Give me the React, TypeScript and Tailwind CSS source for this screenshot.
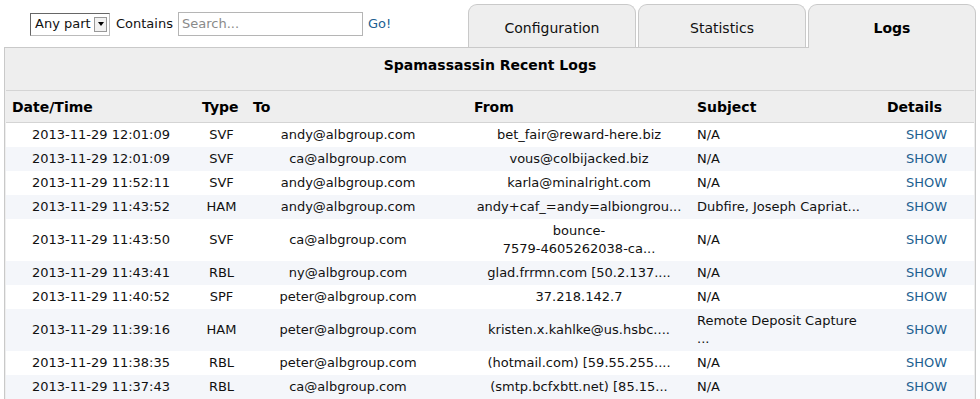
import React from "react";

type Cell = string | string[];

const ROWS: { date: string; type: string; to: string; from: Cell; subject: Cell }[] = [
  { date: "2013-11-29 12:01:09", type: "SVF", to: "andy@albgroup.com", from: "bet_fair@reward-here.biz", subject: "N/A" },
  { date: "2013-11-29 12:01:09", type: "SVF", to: "ca@albgroup.com", from: "vous@colbijacked.biz", subject: "N/A" },
  { date: "2013-11-29 11:52:11", type: "SVF", to: "andy@albgroup.com", from: "karla@minalright.com", subject: "N/A" },
  { date: "2013-11-29 11:43:52", type: "HAM", to: "andy@albgroup.com", from: "andy+caf_=andy=albiongrou...", subject: "Dubfire, Joseph Capriat..." },
  { date: "2013-11-29 11:43:50", type: "SVF", to: "ca@albgroup.com", from: ["bounce-", "7579-4605262038-ca..."], subject: "N/A" },
  { date: "2013-11-29 11:43:41", type: "RBL", to: "ny@albgroup.com", from: "glad.frrmn.com [50.2.137....", subject: "N/A" },
  { date: "2013-11-29 11:40:52", type: "SPF", to: "peter@albgroup.com", from: "37.218.142.7", subject: "N/A" },
  { date: "2013-11-29 11:39:16", type: "HAM", to: "peter@albgroup.com", from: "kristen.x.kahlke@us.hsbc....", subject: ["Remote Deposit Capture", "..."] },
  { date: "2013-11-29 11:38:35", type: "RBL", to: "peter@albgroup.com", from: "(hotmail.com) [59.55.255....", subject: "N/A" },
  { date: "2013-11-29 11:37:43", type: "RBL", to: "ca@albgroup.com", from: "(smtp.bcfxbtt.net) [85.15...", subject: "N/A" },
];

function Lines({ value }: { value: Cell }) {
  if (typeof value === "string") return <>{value}</>;
  return (
    <>
      {value.map((line, i) => (
        <React.Fragment key={i}>
          {i > 0 && <br />}
          {line}
        </React.Fragment>
      ))}
    </>
  );
}

function Tab({ label, active = false }: { label: string; active?: boolean }) {
  return (
    <div
      className={
        active
          ? "relative z-10 -mb-px flex h-[44px] w-[168px] items-center justify-center rounded-t-[9px] border border-b-0 border-[#c9c9c9] bg-[#eeeeee] pt-[3px] text-[14px] font-bold text-black"
          : "flex h-[43px] w-[168px] items-center justify-center rounded-t-[9px] border border-b-0 border-[#c9c9c9] bg-[#eeeeee] pt-[4px] text-[14px] text-[#111]"
      }
    >
      {label}
    </div>
  );
}

export default function App() {
  return (
    <div className="h-[399px] w-[980px] overflow-hidden bg-white font-['DejaVu_Sans',Verdana,sans-serif] text-[13px] text-[#111]">
      {/* Top bar: search + tabs */}
      <div className="flex h-[47px] items-end">
        <div className="mb-[11px] ml-[30px] flex items-center">
          <div className="flex h-[23px] w-[80px] items-center whitespace-nowrap border border-t-[#666] border-l-[#666] border-r-[#bbb] border-b-[#bbb] bg-white pl-[4px] pr-[2px] text-[13px]">
            <span className="flex-1">Any part</span>
            <span className="flex h-[15px] w-[13px] items-center justify-center border border-[#999] bg-[#f2f2f2]">
              <span className="h-0 w-0 border-x-[3px] border-t-[4px] border-x-transparent border-t-black" />
            </span>
          </div>
          <span className="ml-[6px] text-[13px]">Contains</span>
          <div className="ml-[5px] flex h-[24px] w-[185px] items-center border border-[#b5b5b5] px-[3px] text-[13px] text-[#8a8a8a]">
            Search...
          </div>
          <span className="ml-[5px] text-[13px] text-[#1d5f91]">Go!</span>
        </div>
        <div className="ml-auto mr-[4px] flex gap-[2px]">
          <Tab label="Configuration" />
          <Tab label="Statistics" />
          <Tab label="Logs" active />
        </div>
      </div>

      {/* Panel */}
      <div className="ml-[4px] w-[972px] border border-[#c9c9c9] bg-[#eeeeee] px-[1px]">
        <div className="flex h-[42px] items-start justify-center pt-[7px] text-[14px] font-bold text-black">
          Spamassassin Recent Logs
        </div>
        <table className="w-full table-fixed border-collapse">
          <colgroup>
            <col className="w-[192px]" />
            <col className="w-[51px]" />
            <col className="w-[221px]" />
            <col className="w-[223px]" />
            <col className="w-[190px]" />
            <col />
          </colgroup>
          <thead>
            <tr className="h-[32px] border-y border-[#d4d4d4] bg-[#eeeeee] text-left text-[14px] font-bold text-black">
              <th className="pl-[6px] pt-[1px]">Date/Time</th>
              <th className="pl-[4px] pt-[1px]">Type</th>
              <th className="pl-[4px] pt-[1px]">To</th>
              <th className="pl-[4px] pt-[1px]">From</th>
              <th className="pl-[4px] pt-[1px]">Subject</th>
              <th className="pl-[4px] pt-[1px]">Details</th>
            </tr>
          </thead>
          <tbody>
            {ROWS.map((r, i) => (
              <tr key={i} className={i % 2 === 1 ? "bg-[#f4f6fa] leading-[18px]" : "bg-white leading-[18px]"}>
                <td className="py-[3px] pl-[6px] pr-[8px] text-center">{r.date}</td>
                <td className="py-[3px] pl-[4px] pr-[8px] text-center">{r.type}</td>
                <td className="py-[3px] pl-[4px] pr-[27px] text-center">{r.to}</td>
                <td className="py-[3px] pl-[4px] pr-[9px] text-center">
                  <Lines value={r.from} />
                </td>
                <td className="py-[3px] pl-[4px] pr-[4px] text-left">
                  <Lines value={r.subject} />
                </td>
                <td className="py-[3px] pl-[4px] pr-[8px] text-center text-[#1d5f91]">SHOW</td>
              </tr>
            ))}
          </tbody>
        </table>
      </div>
    </div>
  );
}
